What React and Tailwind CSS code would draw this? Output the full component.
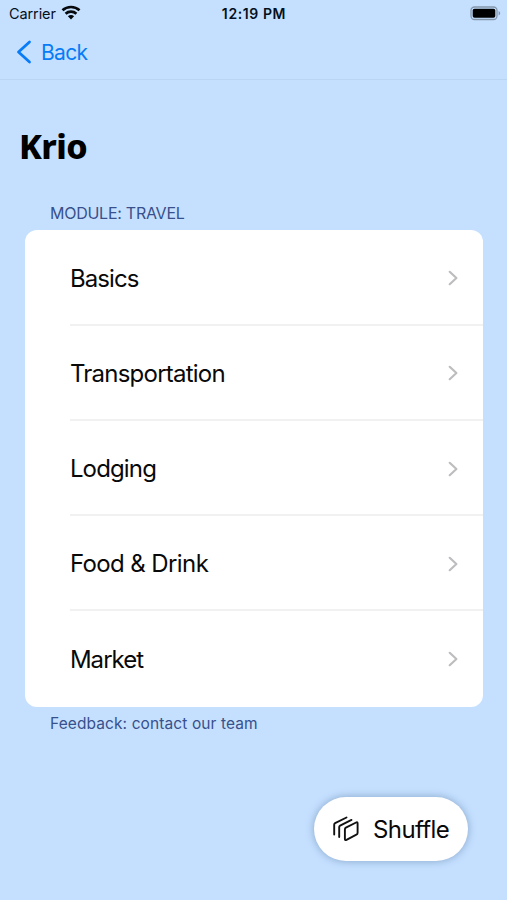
import React from "react";

const MODULES = [
  { label: "Basics", tracking: "tracking-[-0.9px]" },
  { label: "Transportation", tracking: "tracking-[-0.76px]" },
  { label: "Lodging", tracking: "tracking-[-0.85px]" },
  { label: "Food & Drink", tracking: "tracking-[-0.6px]" },
  { label: "Market", tracking: "tracking-[-0.95px]" },
];

function WifiIcon() {
  return (
    <svg className="mb-[3px]" width="20" height="15" viewBox="0 0 20 15" fill="none" stroke="#05080c" strokeWidth="2.700">
      <path d="M1.500 5.200C6.200 .9 13.800 .9 18.500 5.200" />
      <path d="M4.600 8.700C7.600 5.900 12.400 5.900 15.400 8.700" />
      <path d="M10 14.500L6.900 11.300C8.600 9.700 11.400 9.700 13.100 11.300Z" fill="#05080c" stroke="none" />
    </svg>
  );
}

function BatteryIcon() {
  return (
    <svg className="mb-[2px]" width="31" height="15" viewBox="0 0 31 15" fill="none">
      <rect x="1" y="1" width="26" height="12.500" rx="3.500" stroke="#8496ab" strokeWidth="1.300" />
      <rect x="2.700" y="2.700" width="22.600" height="9.100" rx="1.800" fill="#000" />
      <path d="M28.600 5V9.500C30.700 8.700 30.700 5.800 28.600 5Z" fill="#8496ab" />
    </svg>
  );
}

function StatusBar() {
  return (
    <div className="grid h-7 grid-cols-3 items-center pl-[9px] pr-[6px] text-[#05101c]">
      <div className="flex items-center gap-[5px]">
        <span className="text-[14.5px] leading-none tracking-[-0.1px]">Carrier</span>
        <WifiIcon />
      </div>
      <span className="pr-[2px] text-center text-[14px] font-semibold leading-none tracking-[0.6px]">12:19 PM</span>
      <div className="flex justify-end">
        <BatteryIcon />
      </div>
    </div>
  );
}

function NavBar() {
  return (
    <div className="flex h-[52px] items-center border-b border-[#b8d5f3] pb-[2px] pl-4 text-[#087cf7]">
      <svg className="mb-px" width="16" height="26" viewBox="0 0 16 26" fill="none" stroke="currentColor" strokeWidth="2.800" strokeLinecap="round" strokeLinejoin="round">
        <path d="M13.500 3L2.500 13L13.500 23" />
      </svg>
      <span className="ml-[9px] text-[21px] leading-none tracking-[-0.7px]">Back</span>
    </div>
  );
}

function Row({ label, tracking, last }) {
  return (
    <div className={`ml-[44.500px] flex h-[95.25px] items-center justify-between pr-6 ${last ? "pt-px" : "border-b-2 border-[#f1f1f2] pt-[3px]"}`}>
      <span className={`text-[24px] leading-none ${tracking}`}>{label}</span>
      <svg className="mb-px" width="11" height="16" viewBox="0 0 11 16" fill="none" stroke="#bdbdc0" strokeWidth="2.200" strokeLinecap="round" strokeLinejoin="round">
        <path d="M1.700 1.800L8.400 8L1.700 14.200" />
      </svg>
    </div>
  );
}

function ShuffleIcon() {
  return (
    <svg width="28" height="28" viewBox="0 0 28 28" fill="none" stroke="#111" strokeWidth="1.900" strokeLinecap="round" strokeLinejoin="round">
      <path d="M3.200 19.500V9.700Q3.200 8.700 4.100 8.200L15.500 2.500" />
      <path d="M8.200 22V12.100Q8.200 11.100 9.100 10.600L20.500 4.900" />
      <path d="M14.900 12.700L25.100 7.500Q26.600 6.800 26.600 8.400V17.700Q26.600 19.100 25.400 19.700L15.500 24.900Q13.900 25.600 13.900 23.900V14.400Q13.900 13.200 14.900 12.700Z" />
    </svg>
  );
}

export default function App() {
  return (
    <div className="flex h-[900px] w-[507px] flex-col overflow-hidden bg-[#c5e0ff] font-['Inter',sans-serif] text-[#090909]">
      <StatusBar />
      <NavBar />
      <h1 className="ml-[19px] mt-[46px] font-['Noto_Sans',sans-serif] text-[34px] font-extrabold leading-[40px] tracking-[-0.6px] text-black">Krio</h1>
      <p className="ml-[50px] mt-[37px] text-[16px] leading-5 tracking-[-0.26px] text-[#38508b]">MODULE: TRAVEL</p>
      <div className="ml-[25.400px] mt-[7.400px] w-[457.200px] rounded-xl bg-white">
        {MODULES.map((item, i) => (
          <Row key={item.label} {...item} last={i === MODULES.length - 1} />
        ))}
      </div>
      <p className="ml-[50px] mt-[7px] text-[15.500px] leading-5 tracking-[0.1px] text-[#38508b]">Feedback: contact our team</p>
      <button className="ml-[314px] mt-[63px] flex h-16 w-[154px] items-center gap-[14px] rounded-full bg-white pl-[17px] shadow-[0_0_8px_rgba(40,75,120,0.4)]">
        <ShuffleIcon />
        <span className="pt-[2px] text-[24px] leading-none tracking-[-0.6px]">Shuffle</span>
      </button>
    </div>
  );
}
